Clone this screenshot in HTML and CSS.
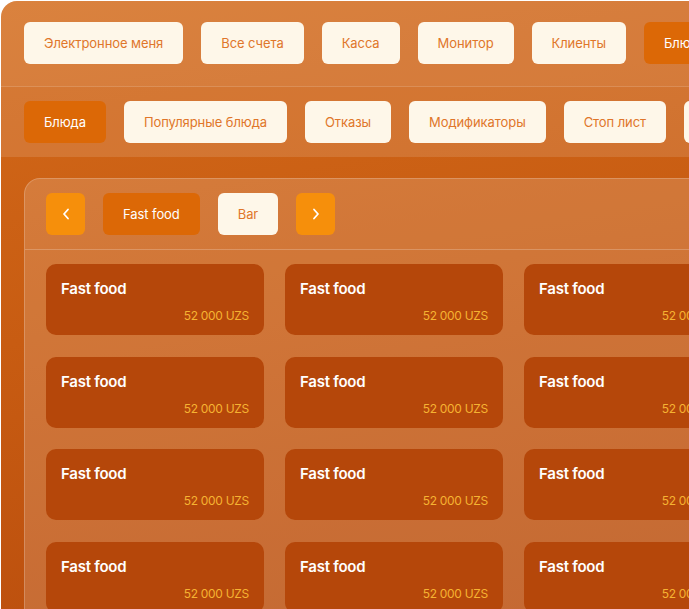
FILE: index.html
```html
<!DOCTYPE html>
<html lang="ru">
<head>
<meta charset="utf-8">
<title>Меню</title>
<link rel="stylesheet" href="styles.css">
</head>
<body>
<div class="frame">
  <nav class="row row-top">
    <button class="btn">Электронное меня</button>
    <button class="btn">Все счета</button>
    <button class="btn">Касса</button>
    <button class="btn">Монитор</button>
    <button class="btn">Клиенты</button>
    <button class="btn btn-active">Блюда</button>
    <button class="btn">Склад</button>
  </nav>
  <nav class="row row-sub">
    <button class="btn btn-active">Блюда</button>
    <button class="btn">Популярные блюда</button>
    <button class="btn">Отказы</button>
    <button class="btn">Модификаторы</button>
    <button class="btn">Стоп лист</button>
    <button class="btn">Склад</button>
  </nav>
  <main class="main">
    <section class="panel">
      <div class="cats">
        <button class="btn btn-arrow" aria-label="Назад">
          <svg width="8" height="12" viewBox="0 0 8 12"><polyline points="6,1.5 2,6 6,10.5" fill="none" stroke="#fff" stroke-width="1.8" stroke-linecap="round" stroke-linejoin="round"/></svg>
        </button>
        <button class="btn btn-active">Fast food</button>
        <button class="btn">Bar</button>
        <button class="btn btn-arrow" aria-label="Вперёд">
          <svg width="8" height="12" viewBox="0 0 8 12"><polyline points="2,1.5 6,6 2,10.5" fill="none" stroke="#fff" stroke-width="1.8" stroke-linecap="round" stroke-linejoin="round"/></svg>
        </button>
      </div>
      <div class="grid">
        <div class="card"><div class="card-title">Fast food</div><div class="card-price">52 000 UZS</div></div>
        <div class="card"><div class="card-title">Fast food</div><div class="card-price">52 000 UZS</div></div>
        <div class="card"><div class="card-title">Fast food</div><div class="card-price">52 000 UZS</div></div>
        <div class="card"><div class="card-title">Fast food</div><div class="card-price">52 000 UZS</div></div>
        <div class="card"><div class="card-title">Fast food</div><div class="card-price">52 000 UZS</div></div>
        <div class="card"><div class="card-title">Fast food</div><div class="card-price">52 000 UZS</div></div>
        <div class="card"><div class="card-title">Fast food</div><div class="card-price">52 000 UZS</div></div>
        <div class="card"><div class="card-title">Fast food</div><div class="card-price">52 000 UZS</div></div>
        <div class="card"><div class="card-title">Fast food</div><div class="card-price">52 000 UZS</div></div>
        <div class="card"><div class="card-title">Fast food</div><div class="card-price">52 000 UZS</div></div>
        <div class="card"><div class="card-title">Fast food</div><div class="card-price">52 000 UZS</div></div>
        <div class="card"><div class="card-title">Fast food</div><div class="card-price">52 000 UZS</div></div>
      </div>
    </section>
  </main>
</div>
</body>
</html>
```

FILE: styles.css
```css
html, body {
  margin: 0;
  padding: 0;
  background: #ffffff;
  overflow: hidden;
  width: 689px;
  height: 609px;
}

body {
  font-family: Inter, "Noto Sans", "Liberation Sans", sans-serif;
}

.frame {
  margin: 1px 0 0 1px;
  width: 900px;
  height: 700px;
  border-top-left-radius: 16px;
  overflow: hidden;
  background: linear-gradient(170deg, #d36a1a 0%, #c85c12 40%, #b4470b 100%);
}

.row {
  display: flex;
  gap: 18px;
  flex-wrap: nowrap;
}

.row-top {
  padding: 21px 0 22px 23px;
  background: rgba(255, 255, 255, 0.16);
  border-bottom: 1px solid rgba(255, 255, 255, 0.14);
}

.row-sub {
  padding: 14px 0 14px 23px;
  background: rgba(255, 255, 255, 0.12);
}

.btn {
  flex-shrink: 0;
  height: 42px;
  padding: 0 20px;
  border: none;
  border-radius: 6px;
  background: #fef7e9;
  color: #e0762a;
  font-family: Inter, "Noto Sans", "Liberation Sans", sans-serif;
  font-size: 13px;
  font-weight: 400;
  letter-spacing: -0.08px;
  display: flex;
  align-items: center;
  justify-content: center;
  white-space: nowrap;
}

.btn-active {
  background: #dc6806;
  color: #ffffff;
}

.btn-arrow {
  width: 39px;
  padding: 0;
  background: #f68f0b;
}

.main {
  padding: 21px 0 0 23px;
}

.panel {
  border: 1px solid rgba(255, 255, 255, 0.2);
  border-right: none;
  border-bottom: none;
  border-top-left-radius: 16px;
  background: rgba(255, 255, 255, 0.16);
}

.cats {
  display: flex;
  gap: 18px;
  padding: 14px 0 14px 21px;
  border-bottom: 1px solid rgba(255, 255, 255, 0.22);
}

.grid {
  display: grid;
  grid-template-columns: repeat(3, 218px);
  column-gap: 21px;
  row-gap: 21.5px;
  padding: 14px 0 0 21px;
}

.card {
  height: 71px;
  box-sizing: border-box;
  padding: 16px 15px 12px 15px;
  border-radius: 10px;
  background: #b5470a;
  display: flex;
  flex-direction: column;
  justify-content: space-between;
}

.card-title {
  color: #ffffff;
  font-size: 15px;
  font-weight: 600;
  letter-spacing: -0.25px;
  line-height: 18px;
}

.card-price {
  color: #f5b332;
  font-size: 12px;
  letter-spacing: -0.3px;
  line-height: 15px;
  text-align: right;
}
```
